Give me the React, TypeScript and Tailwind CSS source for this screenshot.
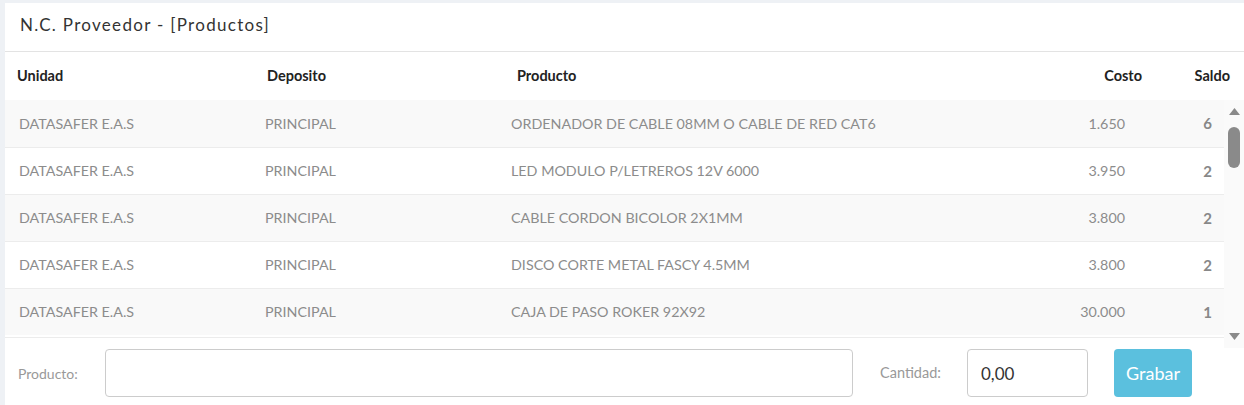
import React from 'react';

type Row = {
  unidad: string;
  deposito: string;
  producto: string;
  costo: string;
  saldo: number;
};

const rows: Row[] = [
  { unidad: 'DATASAFER E.A.S', deposito: 'PRINCIPAL', producto: 'ORDENADOR DE CABLE 08MM O CABLE DE RED CAT6', costo: '1.650', saldo: 6 },
  { unidad: 'DATASAFER E.A.S', deposito: 'PRINCIPAL', producto: 'LED MODULO P/LETREROS 12V 6000', costo: '3.950', saldo: 2 },
  { unidad: 'DATASAFER E.A.S', deposito: 'PRINCIPAL', producto: 'CABLE CORDON BICOLOR 2X1MM', costo: '3.800', saldo: 2 },
  { unidad: 'DATASAFER E.A.S', deposito: 'PRINCIPAL', producto: 'DISCO CORTE METAL FASCY 4.5MM', costo: '3.800', saldo: 2 },
  { unidad: 'DATASAFER E.A.S', deposito: 'PRINCIPAL', producto: 'CAJA DE PASO ROKER 92X92', costo: '30.000', saldo: 1 },
];

function Scrollbar() {
  return (
    <div className="absolute right-0 top-0 flex h-[248px] w-[20px] flex-col items-center bg-[#fafafa]">
      {/* up arrow */}
      <svg width="11" height="7" viewBox="0 0 11 7" className="mt-[8px]">
        <path d="M5.5 0 L11 7 L0 7 Z" fill="#8a8a8a" />
      </svg>
      {/* thumb */}
      <div className="mt-[12px] h-[41px] w-[12px] rounded-full bg-[#8a8a8a]" />
      <div className="flex-1" />
      {/* down arrow */}
      <svg width="11" height="7" viewBox="0 0 11 7" className="mb-[8px]">
        <path d="M0 0 L11 0 L5.5 7 Z" fill="#8a8a8a" />
      </svg>
    </div>
  );
}

export default function App() {
  return (
    <div
      className="h-[405px] w-[1244px] overflow-hidden bg-[#eef1f5] pl-[5px] pt-[3px]"
      style={{ fontFamily: 'Lato, "Open Sans", sans-serif' }}
    >
      <div className="flex h-full flex-col bg-white">
        {/* Title */}
        <div className="flex h-[49px] items-center border-b border-[#e3e3e3] pb-[4px] pl-[15px]">
          <span className="text-[17px] tracking-[1.3px] text-[#333]">N.C. Proveedor - [Productos]</span>
        </div>

        {/* Table header */}
        <div className="grid h-[48px] grid-cols-[250px_250px_1fr_120px_88px] items-center text-[14.5px] font-bold text-[#222]">
          <div className="pl-[12px]">Unidad</div>
          <div className="pl-[12px]">Deposito</div>
          <div className="pl-[12px]">Producto</div>
          <div className="pr-[14px] text-right">Costo</div>
          <div className="pr-[14px] text-right">Saldo</div>
        </div>

        {/* Table body */}
        <div className="relative h-[237px] pr-[20px]">
          {rows.map((row, i) => (
            <div
              key={i}
              className={
                'grid h-[47px] grid-cols-[250px_250px_1fr_120px_88px] items-center text-[14.3px] text-[#8c8c8c] ' +
                (i % 2 === 0 ? 'bg-[#f9f9f9] ' : 'bg-white ') +
                (i > 0 ? 'border-t border-[#ececec]' : '')
              }
            >
              <div className="pl-[14px]">{row.unidad}</div>
              <div className="pl-[10px]">{row.deposito}</div>
              <div className="pl-[6px]">{row.producto}</div>
              <div className="pr-[11px] text-right">{row.costo}</div>
              <div className="pr-[12px] text-right text-[15px] font-bold text-[#888]">{row.saldo}</div>
            </div>
          ))}
          <Scrollbar />
        </div>

        {/* Footer form */}
        <div className="flex flex-1 items-start border-t border-[#ececec] pl-[13px] pt-[11px]">
          <div className="flex h-[48px] w-[87px] items-center text-[14px] text-[#999]">Producto:</div>
          <input
            type="text"
            className="h-[48px] w-[748px] rounded-[4px] border border-[#cccccc] bg-white px-3 text-[17px] text-[#333] outline-none"
          />
          <div className="ml-[27px] flex h-[48px] w-[87px] items-center text-[14.5px] text-[#999]">Cantidad:</div>
          <input
            type="text"
            defaultValue="0,00"
            className="h-[48px] w-[121px] rounded-[4px] border border-[#cccccc] bg-white pl-[13px] text-[17px] text-[#333] outline-none"
          />
          <button className="ml-[26px] h-[48px] w-[78px] rounded-[4px] bg-[#5bc0de] text-[18px] text-white">
            Grabar
          </button>
        </div>
      </div>
    </div>
  );
}
